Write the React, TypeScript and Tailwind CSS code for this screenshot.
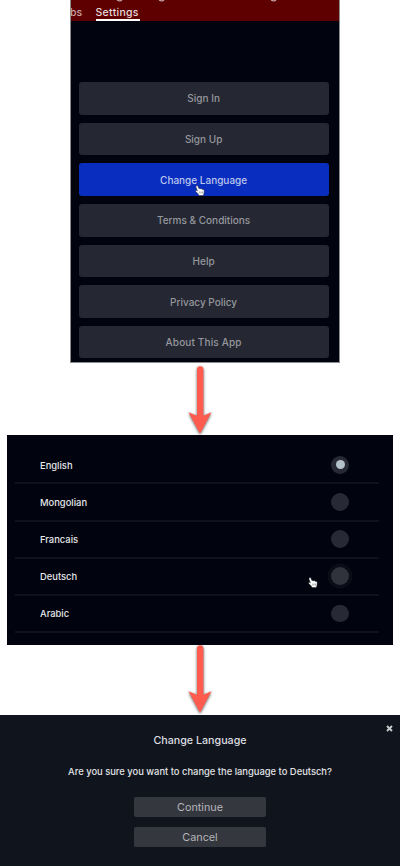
import React from "react";

const menu = [
  { label: "Sign In", track: "tracking-normal" },
  { label: "Sign Up", track: "tracking-normal" },
  { label: "Change Language", track: "tracking-normal", active: true },
  { label: "Terms & Conditions", track: "tracking-normal" },
  { label: "Help", track: "tracking-normal" },
  { label: "Privacy Policy", track: "tracking-normal" },
  { label: "About This App", track: "tracking-[0.15px]" },
];

const languages = ["English", "Mongolian", "Francais", "Deutsch", "Arabic"];

function Hand({ className }: { className: string }) {
  return (
    <svg className={className} width="10" height="11" viewBox="0 0 20 22">
      <path
        d="M2 2.5C3.5.5 5.5 1 6.2 3L8 7.5C9.5 6.3 11 6.8 11.5 8C13 7 14.3 7.6 15 9C17 8.4 18.3 9.5 18.4 11.5L18 16.5L16.5 21H8L6 17.5L1.5 13C.8 11 2.5 10 4 11L5 11.8L2 4.5Z"
        fill="#fff"
        stroke="#20232b"
        strokeWidth="1"
      />
      <path d="M9.5 13v4M12.2 13v4M15 13v4" stroke="#555" strokeWidth="1" />
    </svg>
  );
}

function Arrow() {
  return (
    <svg
      className="block overflow-visible drop-shadow-[0_1px_1.5px_rgba(0,0,0,0.65)]"
      width="24"
      height="69"
      viewBox="0 0 24 69"
    >
      <path
        d="M9 3.6Q9 .2 12.2 .2Q15.4 .2 15.4 3.6V49.7L23.5 46.2L12 67.7L.5 46.2L9 49.7Z"
        fill="#ff5b4e"
      />
    </svg>
  );
}

export default function App() {
  return (
    <main className="flex h-[866px] w-[400px] flex-col items-center overflow-hidden bg-white font-['Inter',sans-serif]">
      <section className="mr-[-10px] h-[363px] w-[270px] shrink-0 overflow-hidden border-x border-b border-[#8b8b90] bg-[#01040f]">
        <header className="relative flex h-[20.5px] bg-[#5e0000] text-[10.5px] leading-[14px] font-medium">
          <svg className="absolute top-0 left-0" width="268" height="2">
            <path
              d="M46 0q3 1.6 5 0M88 0q3 1.6 5 0M200 0q3 1.6 5 0"
              stroke="#c6a5a5"
              strokeWidth="1.2"
              fill="none"
            />
          </svg>
          <span className="mt-[6px] ml-[-1px] w-[25.5px] text-[#c9a9a9]">bs</span>
          <span className="mt-[6px] h-[15px] w-[44px] border-b-2 border-white tracking-[0.3px] whitespace-nowrap text-[#e6dada]">
            Settings
          </span>
        </header>
        <nav className="mt-[61.5px] mr-[10.3px] ml-[7.5px] flex flex-col gap-[8.05px]">
          {menu.map((m) => (
            <button
              key={m.label}
              className={`relative flex h-[32.6px] items-center justify-center rounded-[3px] pt-[1px] text-[10px] font-medium ${m.track} ${
                m.active ? "bg-[#092dbf] text-[#bcc6ed]" : "bg-[#252833] text-[#96979d]"
              }`}
            >
              {m.label}
              {m.active && <Hand className="absolute top-[22px] left-[116px]" />}
            </button>
          ))}
        </nav>
      </section>

      <div className="h-[72px] shrink-0 pt-[3px]">
        <Arrow />
      </div>

      <section className="h-[210px] w-[386px] shrink-0 bg-[#01040f] pt-[12.4px] pr-[14px] pl-[8px]">
        {languages.map((l) => (
          <div
            key={l}
            className="relative flex h-[37.1px] items-center justify-between border-b-2 border-[#0f121c] pr-[30px] pl-[25px] text-[9.4px] font-medium text-[#e6e7e9]"
          >
            <span className="pt-[2px]">{l}</span>
            <span
              className={`flex h-[17.6px] w-[17.6px] items-center justify-center rounded-full ${
                l === "Deutsch" ? "bg-[#31333c] shadow-[0_0_0_3.5px_#0a0d17]" : "bg-[#272a34]"
              }`}
            >
              {l === "English" && <span className="h-[9px] w-[9px] rounded-full bg-[#b3c1cb]" />}
            </span>
            {l === "Deutsch" && <Hand className="absolute top-[18px] left-[292.5px]" />}
          </div>
        ))}
      </section>

      <div className="h-[70px] shrink-0">
        <Arrow />
      </div>

      <section className="relative flex h-[151px] w-full shrink-0 flex-col items-center bg-[#10141d]">
        <svg className="absolute top-[10px] right-[7px]" width="7" height="7" viewBox="0 0 7 7">
          <path d="M1 1L6 6M6 1L1 6" stroke="#c9cacd" strokeWidth="1.9" />
        </svg>
        <h1 className="mt-[18px] text-[10.7px] leading-[16px] font-medium text-[#dedfe1]">
          Change Language
        </h1>
        <p className="mt-[15px] text-[9.4px] leading-[15px] font-medium whitespace-nowrap text-[#e2e3e5]">
          Are you sure you want to change the language to Deutsch?
        </p>
        <button className="mt-[18px] h-[20px] w-[132px] rounded-[2px] bg-[#35373f] pt-px text-[10.8px] leading-[20px] text-[#b4b5b9]">
          Continue
        </button>
        <button className="mt-[10px] h-[20px] w-[132px] rounded-[2px] bg-[#35373f] pt-px text-[10.8px] leading-[20px] text-[#b4b5b9]">
          Cancel
        </button>
      </section>
    </main>
  );
}
